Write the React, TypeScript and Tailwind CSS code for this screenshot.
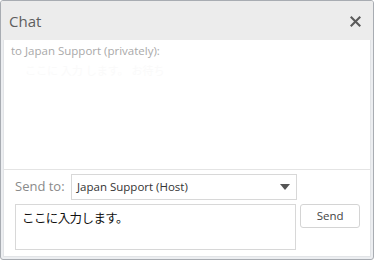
import React from "react";

export default function App() {
  const font = { fontFamily: '"Open Sans", "Noto Sans", "Noto Sans CJK JP", sans-serif' };
  return (
    <div className="w-[374px] h-[260px] bg-white" style={font}>
      <div className="w-[374px] h-[260px] border border-[#a8acb2] rounded-[3px] bg-[#eceef1] flex flex-col overflow-hidden">
        <div className="h-[39px] shrink-0 bg-[#ececec] flex items-center justify-between pl-[8px] pr-[12px]">
          <span className="text-[15px] text-[#5e5e5e] leading-none mt-[1px]">Chat</span>
          <svg width="11" height="11" viewBox="0 0 11 11" className="mt-[1px]">
            <path d="M1.5 1.5 L9.5 9.5 M9.5 1.5 L1.5 9.5" stroke="#5a5a5a" strokeWidth="2.1" strokeLinecap="square" />
          </svg>
        </div>
        <div className="flex-1 mx-[2px] mb-[2px] bg-white border-x border-b border-[#e2e4e7] flex flex-col">
          <div className="h-[130px] shrink-0 border-b border-[#e4e4e4] pl-[7px] pt-[2px]">
            <div className="text-[11.5px] text-[#a9a9a9] leading-[18px]">to Japan Support (privately):</div>
            <div className="text-[11px] text-[#fafafa] leading-[14px] mt-[4px] pl-[14px]">ここに 入力 します。 お待ち</div>
          </div>
          <div className="flex-1 pl-[11px] pr-[10px] pt-[4px]">
            <div className="flex items-center h-[26px]">
              <span className="text-[13px] text-[#8a8a8a] w-[56px]">Send to:</span>
              <div className="w-[226px] h-[26px] border border-[#d8d8d8] flex items-center justify-between pl-[5px] pr-[6px]">
                <span className="text-[11.5px] text-[#333]">Japan Support (Host)</span>
                <svg width="10" height="6" viewBox="0 0 10 6"><path d="M0 0 L10 0 L5 6 Z" fill="#555" /></svg>
              </div>
            </div>
            <div className="flex mt-[4px] gap-[4px]">
              <div className="w-[282px] h-[46px] border border-[#d8d8d8] pl-[6px] pt-[4px] text-[12.5px] tracking-[-0.6px] text-[#111]" style={{ fontFamily: '"Noto Sans CJK JP", sans-serif' }}>
                ここに入力します。
              </div>
              <div className="w-[60px] h-[24px] border border-[#d4d4d4] rounded-[3px] flex items-center justify-center text-[11.5px] text-[#444] bg-white">
                Send
              </div>
            </div>
          </div>
        </div>
      </div>
    </div>
  );
}
